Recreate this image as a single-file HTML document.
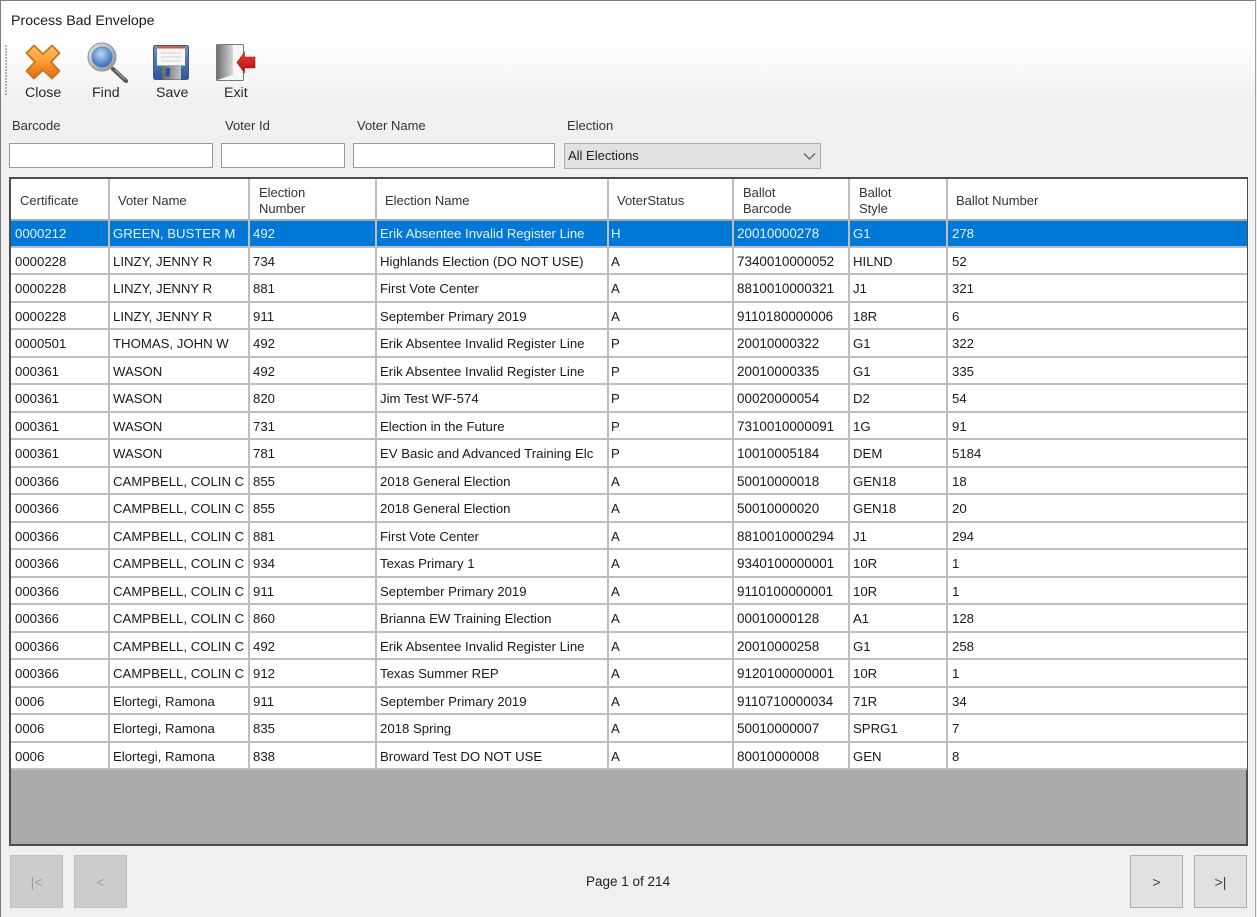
<!DOCTYPE html>
<html><head><meta charset="utf-8"><style>
html,body{margin:0;padding:0;width:1257px;height:917px;overflow:hidden;background:#f0f0f0;font-family:"Liberation Sans",sans-serif;font-size:13px;color:#1a1a1a}
#w{position:absolute;left:0;top:0;width:1256px;height:917px;border-left:1px solid #7a7a7a;border-top:1px solid #7a7a7a;border-right:1px solid #a0a0a0;box-sizing:border-box;background:#f0f0f0}
.a{position:absolute}
.t{position:absolute;white-space:nowrap;line-height:16px}
.tb{font-size:14.200px;color:#2a2a2a}
.in{position:absolute;background:#fff;border:1px solid #999;box-sizing:border-box;height:25px;top:143px}
#grid{position:absolute;left:9px;top:177px;width:1239px;height:669px;border:2px solid #4d4d4d;box-sizing:border-box;background:#ababab}
.r{position:absolute;left:11px;width:1236px;height:27.5px;background:#fff;border-bottom:2px solid #bebebe;box-sizing:border-box;line-height:27px;font-size:13.200px}
.r.s{background:#0078d7;color:#e8f2fb}
.r span{position:absolute;top:0;white-space:nowrap}
.c1{left:4px}.c2{left:102px}.c3{left:242px}.c4{left:369px}.c5{left:600px}.c6{left:726px;font-size:13.450px}.c7{left:842px}.c8{left:941px}
.v{position:absolute;top:179px;width:2px;height:591px;background:#bebebe}
.h{color:#333;position:absolute;white-space:nowrap;line-height:16px;top:193px}
.h2{top:185px}
.b{position:absolute;top:855px;width:53px;height:53px;box-sizing:border-box;border:1px solid #adadad;background:#e1e1e1;text-align:center;line-height:52px;color:#444;font-size:14px}
.b.d{background:#cccccc;border-color:#bfbfbf;color:#a0a0a0}
</style></head><body>
<div id="w"></div>
<div class="a" style="left:1px;top:1px;width:1254px;height:38px;background:#fff"></div>
<div class="a" style="left:1px;top:39px;width:1254px;height:66px;background:linear-gradient(#ffffff,#f0f0f0)"></div>
<div class="t" style="left:11px;top:13px;font-size:14.200px">Process Bad Envelope</div>

<div class="a" style="left:5px;top:45px;width:2px;height:51px;background:repeating-linear-gradient(#b4b4b4 0,#b4b4b4 2px,transparent 2px,transparent 3px)"></div>

<svg class="a" style="left:0;top:40px" width="270" height="46" viewBox="0 40 270 46">
<defs>
<linearGradient id="o" x1="0" y1="0" x2="0" y2="1"><stop offset="0" stop-color="#ffc163"/><stop offset=".5" stop-color="#fb9a34"/><stop offset="1" stop-color="#e8690f"/></linearGradient>
<radialGradient id="l" cx=".45" cy=".35" r=".7"><stop offset="0" stop-color="#bcd8f2"/><stop offset=".6" stop-color="#5e93cf"/><stop offset="1" stop-color="#2f62a6"/></radialGradient>
<linearGradient id="m" x1="0" y1="0" x2="1" y2="1"><stop offset="0" stop-color="#e6e6e6"/><stop offset="1" stop-color="#8a8f96"/></linearGradient>
<linearGradient id="f" x1="0" y1="0" x2="0" y2="1"><stop offset="0" stop-color="#6e94cc"/><stop offset="1" stop-color="#2f5596"/></linearGradient>
<linearGradient id="dr" x1="0" y1="0" x2="1" y2="0"><stop offset="0" stop-color="#6f6f6f"/><stop offset="1" stop-color="#d8d8d8"/></linearGradient>
<linearGradient id="ar" x1="0" y1="0" x2="0" y2="1"><stop offset="0" stop-color="#f03a3a"/><stop offset="1" stop-color="#b00c0c"/></linearGradient>
<linearGradient id="sh" x1="0" y1="0" x2="1" y2="0"><stop offset="0" stop-color="#6a6a6a"/><stop offset="1" stop-color="#c4c4c4"/></linearGradient>
</defs>
<path d="M26.500 53 L34 45.500 L43 54 L52 45.500 L59.500 53 L51 62 L59.500 71 L52 78.500 L43 70 L34 78.500 L26.500 71 L35 62 Z" fill="url(#o)" stroke="#c9721f" stroke-width="1.800" stroke-linejoin="round"/>
<path d="M113 69 L126 81" stroke="#5a5a5a" stroke-width="4.200" stroke-linecap="round"/>
<path d="M115 70 L125 79.500" stroke="#a8a8a8" stroke-width="1"/>
<circle cx="102" cy="57" r="14" fill="url(#m)" stroke="#8d9198" stroke-width="1"/>
<circle cx="102" cy="57" r="10" fill="url(#l)" stroke="#5a7fb0" stroke-width=".8"/>
<rect x="153.500" y="45.500" width="35" height="34" rx="2" fill="url(#f)" stroke="#3a5688"/>
<rect x="157" y="46.500" width="28" height="19" fill="#f7f7f7"/>
<rect x="157" y="46.500" width="28" height="2" fill="#e2522f"/>
<path d="M161 53H181M161 57H181M161 61H181" stroke="#cfcfcf" stroke-width="1"/>
<rect x="162" y="66" width="19" height="13.500" fill="url(#sh)"/>
<rect x="165.500" y="68" width="4.500" height="8.500" fill="#2f5596"/>
<rect x="216.500" y="44.500" width="27" height="36" rx="1" fill="#f6f6f6" stroke="#777"/>
<path d="M217 45 H233 V75 L217 80 Z" fill="url(#dr)"/>
<path d="M229 58 L232 62 L229 66" stroke="#bdbdbd" fill="none"/>
<path d="M237 62.500 L244.500 52 V57 H255 V68 H244.500 V73 Z" fill="url(#ar)" stroke="#a51010" stroke-width=".6"/>
</svg>

<div class="t tb" style="left:25px;top:85px">Close</div>
<div class="t tb" style="left:92px;top:85px">Find</div>
<div class="t tb" style="left:156px;top:85px">Save</div>
<div class="t tb" style="left:224px;top:85px">Exit</div>

<div class="t" style="left:12px;top:118px;color:#333">Barcode</div>
<div class="t" style="left:225px;top:118px;color:#333">Voter Id</div>
<div class="t" style="left:357px;top:118px;color:#333">Voter Name</div>
<div class="t" style="left:567px;top:118px;color:#333">Election</div>
<div class="in" style="left:9px;width:204px"></div>
<div class="in" style="left:221px;width:124px"></div>
<div class="in" style="left:353px;width:202px"></div>
<div class="a" style="left:564px;top:143px;width:257px;height:26px;box-sizing:border-box;background:#e1e1e1;border:1px solid #adadad"></div>
<div class="t" style="left:568px;top:148px;color:#222">All Elections</div>
<svg class="a" style="left:803px;top:152px" width="14" height="9"><path d="M1 1.500 L6.500 7 L12 1.500" fill="none" stroke="#555" stroke-width="1.200"/></svg>

<div id="grid"></div>
<div class="a" style="left:11px;top:179px;width:1236px;height:41px;background:#fff"></div>
<div class="h" style="left:20px">Certificate</div>
<div class="h" style="left:118px">Voter Name</div>
<div class="h h2" style="left:259px">Election<br>Number</div>
<div class="h" style="left:385px">Election Name</div>
<div class="h" style="left:617px">VoterStatus</div>
<div class="h h2" style="left:743px">Ballot<br>Barcode</div>
<div class="h h2" style="left:859px">Ballot<br>Style</div>
<div class="h" style="left:956px">Ballot Number</div>

<div class="r s" style="top:220px"><span class="c1">0000212</span><span class="c2">GREEN, BUSTER M</span><span class="c3">492</span><span class="c4">Erik Absentee Invalid Register Line</span><span class="c5">H</span><span class="c6">20010000278</span><span class="c7">G1</span><span class="c8">278</span></div>
<div class="r" style="top:247.500px"><span class="c1">0000228</span><span class="c2">LINZY, JENNY R</span><span class="c3">734</span><span class="c4">Highlands Election (DO NOT USE)</span><span class="c5">A</span><span class="c6">7340010000052</span><span class="c7">HILND</span><span class="c8">52</span></div>
<div class="r" style="top:275px"><span class="c1">0000228</span><span class="c2">LINZY, JENNY R</span><span class="c3">881</span><span class="c4">First Vote Center</span><span class="c5">A</span><span class="c6">8810010000321</span><span class="c7">J1</span><span class="c8">321</span></div>
<div class="r" style="top:302.500px"><span class="c1">0000228</span><span class="c2">LINZY, JENNY R</span><span class="c3">911</span><span class="c4">September Primary 2019</span><span class="c5">A</span><span class="c6">9110180000006</span><span class="c7">18R</span><span class="c8">6</span></div>
<div class="r" style="top:330px"><span class="c1">0000501</span><span class="c2">THOMAS, JOHN W</span><span class="c3">492</span><span class="c4">Erik Absentee Invalid Register Line</span><span class="c5">P</span><span class="c6">20010000322</span><span class="c7">G1</span><span class="c8">322</span></div>
<div class="r" style="top:357.500px"><span class="c1">000361</span><span class="c2">WASON</span><span class="c3">492</span><span class="c4">Erik Absentee Invalid Register Line</span><span class="c5">P</span><span class="c6">20010000335</span><span class="c7">G1</span><span class="c8">335</span></div>
<div class="r" style="top:385px"><span class="c1">000361</span><span class="c2">WASON</span><span class="c3">820</span><span class="c4">Jim Test WF-574</span><span class="c5">P</span><span class="c6">00020000054</span><span class="c7">D2</span><span class="c8">54</span></div>
<div class="r" style="top:412.500px"><span class="c1">000361</span><span class="c2">WASON</span><span class="c3">731</span><span class="c4">Election in the Future</span><span class="c5">P</span><span class="c6">7310010000091</span><span class="c7">1G</span><span class="c8">91</span></div>
<div class="r" style="top:440px"><span class="c1">000361</span><span class="c2">WASON</span><span class="c3">781</span><span class="c4">EV Basic and Advanced Training Elc</span><span class="c5">P</span><span class="c6">10010005184</span><span class="c7">DEM</span><span class="c8">5184</span></div>
<div class="r" style="top:467.500px"><span class="c1">000366</span><span class="c2">CAMPBELL, COLIN C</span><span class="c3">855</span><span class="c4">2018 General Election</span><span class="c5">A</span><span class="c6">50010000018</span><span class="c7">GEN18</span><span class="c8">18</span></div>
<div class="r" style="top:495px"><span class="c1">000366</span><span class="c2">CAMPBELL, COLIN C</span><span class="c3">855</span><span class="c4">2018 General Election</span><span class="c5">A</span><span class="c6">50010000020</span><span class="c7">GEN18</span><span class="c8">20</span></div>
<div class="r" style="top:522.500px"><span class="c1">000366</span><span class="c2">CAMPBELL, COLIN C</span><span class="c3">881</span><span class="c4">First Vote Center</span><span class="c5">A</span><span class="c6">8810010000294</span><span class="c7">J1</span><span class="c8">294</span></div>
<div class="r" style="top:550px"><span class="c1">000366</span><span class="c2">CAMPBELL, COLIN C</span><span class="c3">934</span><span class="c4">Texas Primary 1</span><span class="c5">A</span><span class="c6">9340100000001</span><span class="c7">10R</span><span class="c8">1</span></div>
<div class="r" style="top:577.500px"><span class="c1">000366</span><span class="c2">CAMPBELL, COLIN C</span><span class="c3">911</span><span class="c4">September Primary 2019</span><span class="c5">A</span><span class="c6">9110100000001</span><span class="c7">10R</span><span class="c8">1</span></div>
<div class="r" style="top:605px"><span class="c1">000366</span><span class="c2">CAMPBELL, COLIN C</span><span class="c3">860</span><span class="c4">Brianna EW Training Election</span><span class="c5">A</span><span class="c6">00010000128</span><span class="c7">A1</span><span class="c8">128</span></div>
<div class="r" style="top:632.500px"><span class="c1">000366</span><span class="c2">CAMPBELL, COLIN C</span><span class="c3">492</span><span class="c4">Erik Absentee Invalid Register Line</span><span class="c5">A</span><span class="c6">20010000258</span><span class="c7">G1</span><span class="c8">258</span></div>
<div class="r" style="top:660px"><span class="c1">000366</span><span class="c2">CAMPBELL, COLIN C</span><span class="c3">912</span><span class="c4">Texas Summer REP</span><span class="c5">A</span><span class="c6">9120100000001</span><span class="c7">10R</span><span class="c8">1</span></div>
<div class="r" style="top:687.500px"><span class="c1">0006</span><span class="c2">Elortegi, Ramona</span><span class="c3">911</span><span class="c4">September Primary 2019</span><span class="c5">A</span><span class="c6">9110710000034</span><span class="c7">71R</span><span class="c8">34</span></div>
<div class="r" style="top:715px"><span class="c1">0006</span><span class="c2">Elortegi, Ramona</span><span class="c3">835</span><span class="c4">2018 Spring</span><span class="c5">A</span><span class="c6">50010000007</span><span class="c7">SPRG1</span><span class="c8">7</span></div>
<div class="r" style="top:742.500px"><span class="c1">0006</span><span class="c2">Elortegi, Ramona</span><span class="c3">838</span><span class="c4">Broward Test DO NOT USE</span><span class="c5">A</span><span class="c6">80010000008</span><span class="c7">GEN</span><span class="c8">8</span></div>

<div class="a" style="left:11px;top:219px;width:1236px;height:2px;background:#a8a8a8"></div>
<div class="v" style="left:108px"></div><div class="v" style="left:248px"></div><div class="v" style="left:375px"></div><div class="v" style="left:607px"></div><div class="v" style="left:732px"></div><div class="v" style="left:848px"></div><div class="v" style="left:946px"></div>

<div class="b d" style="left:10px">|&lt;</div>
<div class="b d" style="left:74px">&lt;</div>
<div class="t" style="left:586px;top:874px;font-size:13.500px;color:#222">Page 1 of 214</div>
<div class="b" style="left:1130px">&gt;</div>
<div class="b" style="left:1194px">&gt;|</div>
</body></html>
